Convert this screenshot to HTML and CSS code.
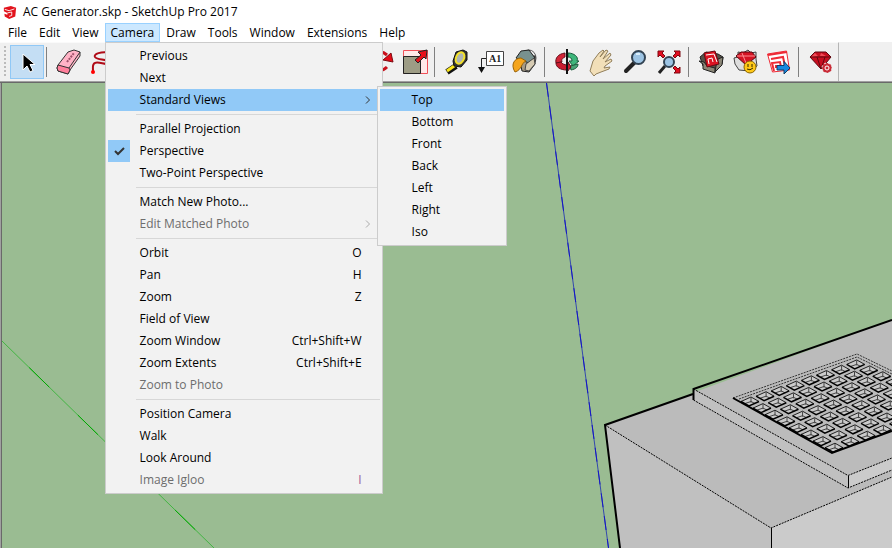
FILE: index.html
```html
<!DOCTYPE html>
<html lang="en">
<head>
<meta charset="utf-8">
<title>AC Generator.skp - SketchUp Pro 2017</title>
<link rel="stylesheet" href="styles.css">
</head>
<body>
<header class="titlebar">
  <svg class="logo" viewBox="0 0 16 16" aria-hidden="true"><path fill="#e2131c" d="M1 3 9 1l6 2-1 10-7 3-5-3-.4-3L5 11V9L1 7z"/><path fill="none" stroke="#fff" d="M2 5 7 6.500l6-2M5 9l5-1v4l-3 1"/></svg>
  <h1 class="title">AC Generator.skp - SketchUp Pro 2017</h1>
</header>
<nav class="menubar">
  <button>File</button><button>Edit</button><button>View</button>
  <div class="menu-anchor">
    <button class="open">Camera</button>
    <div class="menu camera-menu">
      <button class="item">Previous</button>
      <button class="item">Next</button>
      <div class="sub-anchor">
        <button class="item active">Standard Views<svg class="chevron" viewBox="0 0 6 8"><path d="M1 .5 4.500 4 1 7.500"/></svg></button>
        <div class="menu submenu">
          <button class="item active">Top</button>
          <button class="item">Bottom</button>
          <button class="item">Front</button>
          <button class="item">Back</button>
          <button class="item">Left</button>
          <button class="item">Right</button>
          <button class="item">Iso</button>
        </div>
      </div>
      <hr>
      <button class="item">Parallel Projection</button>
      <button class="item"><span class="check"><svg viewBox="0 0 22 22"><path d="m7 11 3 3 6-6"/></svg></span>Perspective</button>
      <button class="item">Two-Point Perspective</button>
      <hr>
      <button class="item">Match New Photo...</button>
      <button class="item" disabled>Edit Matched Photo<svg class="chevron" viewBox="0 0 6 8"><path d="M1 .5 4.500 4 1 7.500"/></svg></button>
      <hr>
      <button class="item">Orbit<span class="key">O</span></button>
      <button class="item">Pan<span class="key">H</span></button>
      <button class="item">Zoom<span class="key">Z</span></button>
      <button class="item">Field of View</button>
      <button class="item">Zoom Window<span class="key">Ctrl+Shift+W</span></button>
      <button class="item">Zoom Extents<span class="key">Ctrl+Shift+E</span></button>
      <button class="item" disabled>Zoom to Photo</button>
      <hr>
      <button class="item">Position Camera</button>
      <button class="item">Walk</button>
      <button class="item">Look Around</button>
      <button class="item" disabled>Image Igloo<span class="key violet">I</span></button>
    </div>
  </div>
  <button>Draw</button><button>Tools</button><button>Window</button><button>Extensions</button><button>Help</button>
</nav>
<div class="toolbar-row">
  <div class="toolbar">
    <span class="grip"></span>
    <button class="tool selected" aria-label="Select"><svg viewBox="0 0 32 32"><path d="M12 8v16l4-4 3 6 3-1.500-3-6h5z" stroke="#fff" fill="#000"/></svg></button>
    <span class="divider"></span>
    <button class="tool" aria-label="Eraser"><svg viewBox="0 0 32 32"><path fill="#ffb3c6" stroke="#333" d="M5 19 15 6l6-2 6 2v4L17 24l-2 4-10-3-1-3z"/><path fill="#ff7f9b" stroke="#333" d="m5 19 11 3 1 2-2 4-10-3-1-3z"/><path stroke="#333" d="M16 22 27 6"/><path stroke="#a0526a" stroke-width="2" stroke-dasharray="2 1" d="m14 16 7-9"/></svg></button>
    <button class="tool" aria-label="Freehand"><svg viewBox="0 0 32 32"><path fill="none" stroke="#b00c18" stroke-width="2" d="M24 7C14 5 6 8 8 11c3 4 14 1 14 7-4 1-11-3-14-1-3 1-2 4-2 8"/><circle cx="6" cy="26" r="2" fill="#f00"/></svg></button>
    <span class="covered-tools"></span>
    <button class="tool" aria-label="Rotate"><svg viewBox="0 0 32 32"><path fill="none" stroke="#c8101b" stroke-width="3" d="M6 12q8-10 16-3M22 21q-7 7-15 0"/><path fill="#e30b17" stroke="#7c0910" d="m26 7 2 9-10-2zM5 26l-1-9 8 3z"/></svg></button>
    <button class="tool" aria-label="Scale"><svg viewBox="0 0 32 32"><path fill="#ffe9e9" stroke="#f05058" d="M4.500 4.500h24v23h-24z"/><path fill="#9d9c85" stroke="#222" d="M4.500 10.500h17v17h-17z"/><path fill="#e8101a" stroke="#222" d="m16 14 6-5-3-3 9-2-1 9-2-2-6 6z"/></svg></button>
    <span class="divider"></span>
    <button class="tool" aria-label="Tape Measure"><svg viewBox="0 0 32 32"><path stroke="#111" stroke-width="6" d="m6 26 9-6"/><path stroke="#f8e51c" stroke-width="3" d="m6 25 10-7"/><path fill="#333" stroke="#111" d="m12 15 3-9 7-2 4 2v8l-6 7-7-1z"/><ellipse cx="19" cy="12" rx="4" ry="6" transform="rotate(25 19 12)" fill="#aeb4b2" stroke="#f3e12a" stroke-width="2"/></svg></button>
    <button class="tool" aria-label="Text"><svg viewBox="0 0 32 32"><path fill="#fff" stroke="#444" d="M11.500 5.500h17v14h-17z"/><path fill="none" stroke="#222" d="M11 12.500H6.500V22"/><path fill="#111" d="M3 21h7l-3.500 6z"/><text x="14" y="16" class="icon-text">A1</text></svg></button>
    <button class="tool" aria-label="Paint Bucket"><svg viewBox="0 0 32 32"><ellipse cx="20" cy="12" rx="7" ry="8" fill="none" stroke="#555"/><path fill="#a79b84" stroke="#222" d="m10 11 16-1v8l-6 8-7-1z"/><path fill="#78918f" stroke="#222" d="m7 12 5-7 8-1 6 8-6 5-8-3z"/><path fill="#d6cbb3" stroke="#444" d="m17 18 8-6 1 6-6 7-4-1z"/><path fill="#f5a51c" stroke="#9a6307" d="M6 26c-5-8 0-14 6-14l5 3c-5 2-4 9-11 11z"/></svg></button>
    <span class="divider"></span>
    <button class="tool" aria-label="Orbit"><svg viewBox="0 0 32 32"><path fill="#3eb67b" stroke="#195c3c" d="M17 7c6 0 11 4 9 8h2l-6 5-4-5h3c0-3-2-4-4-4z"/><path fill="#48a576" stroke="#195c3c" d="m19 20 8-2c0 3-2 5-7 6z"/><path fill="#d32638" stroke="#640f1a" d="M14 7C7 8 4 12 5 17l6-1c-1-3 1-4 3-5z"/><path fill="#c91c2f" stroke="#640f1a" d="m5 17 5-1c1 2 4 3 7 3v-3l3 5-4 5v-2C9 24 5 21 5 17z"/><path stroke="#111" stroke-width="2" d="M16 3v25"/></svg></button>
    <button class="tool" aria-label="Pan"><svg viewBox="0 0 32 32"><path fill="#f2dfb8" stroke="#917e5a" d="m5 25 3-10 6-8 4-3 1 1-4 6 6-7 2 1-5 8 7-6 1 2-6 7 6-3 1 2-7 5-1 2 6-1-1 2-8 3-5 2-2 2z"/></svg></button>
    <button class="tool" aria-label="Zoom"><svg viewBox="0 0 32 32"><path stroke="#222" stroke-width="4" stroke-linecap="round" d="m7 25 8-8"/><circle cx="19.500" cy="11.500" r="6.500" fill="#9dc4e4" stroke="#334454" stroke-width="2"/><path stroke="#d9edfa" stroke-width="2" d="m17 8 4 0"/></svg></button>
    <button class="tool" aria-label="Zoom Extents"><svg viewBox="0 0 32 32"><path stroke="#222" stroke-width="3" d="m6 27 6-7"/><circle cx="16" cy="16" r="5" fill="#9dc4e4" stroke="#334454" stroke-width="2"/><g fill="#e20d20" stroke="#7c0910"><path d="M5 5h6L9 7l3 3-2 2-3-3-2 2zM27 5h-6l2 2-3 3 2 2 3-3 2 2zM27 27h-6l2-2-3-3 2-2 3 3 2-2z"/></g></svg></button>
    <span class="divider"></span>
    <button class="tool" aria-label="3D Warehouse"><svg viewBox="0 0 32 32"><path fill="#555248" stroke="#222" d="m5 11 6-5 12 2 5 3-1 7-7 6-12-4z"/><path fill="#8c8878" stroke="#222" d="m4 15 5 1 3 4 8 2v5L8 23v-5zM21 20l2-7 5-2-1 8-7 7z"/><path fill="#dc1422" stroke="#670912" d="m9 7 11-2 4 13-12 3z"/><path fill="none" stroke="#fff" d="m11 9 8-1 3 8M14 18l-1-5 4-1 1 4"/></svg></button>
    <button class="tool" aria-label="Share Model"><svg viewBox="0 0 32 32"><path fill="#ddd" stroke="#444" d="m5 12 4-1V6l5 1 5-3 3 3 5-1v7l1 7-7 5-11-1-4-6z"/><path fill="#d41323" stroke="#5b0710" d="m7 10 5-4h11l4 5-10 8z"/><path stroke="#ff8b91" d="M8 10h18M13 7l4 10"/><circle cx="21" cy="21" r="6" fill="#ffc817" stroke="#896500"/><path fill="none" stroke="#332900" d="M19 18v3m4-3v3m-5 2q3 2 6-1"/></svg></button>
    <button class="tool" aria-label="Send to LayOut"><svg viewBox="0 0 32 32"><path fill="#fff" stroke="#ee2a35" d="m4.500 8 19-3 3 19-17 2z"/><path fill="none" stroke="#ee2a35" stroke-width="2" d="m5 9 19-3M8 13l12-2 2 9M11 25l-2-8 8-1 1 5M13 22v-3"/><path fill="#1689e0" stroke="#123d66" d="M14 19.500h7v-4l6 6.500-6 6v-4h-7z"/></svg></button>
    <span class="divider"></span>
    <button class="tool" aria-label="Extension Warehouse"><svg viewBox="0 0 32 32"><path fill="#c70e20" stroke="#5c0710" d="m5 11 5-5h11l5 5-10 12z"/><path fill="#f04b57" d="m10 7 3 3-7 1zm6 0 5 3h-6z"/><path fill="none" stroke="#65080f" d="M5 11h21M12 11l4 12 4-12"/><circle cx="22" cy="22" r="5" fill="#c92a36" stroke="#f0f0f0" stroke-dasharray="2 2"/><circle cx="22" cy="22" r="2" fill="#c92a36" stroke="#fff"/></svg></button>
  </div>
</div>
<main class="viewport">
  <svg class="scene" viewBox="2 83 890 465" preserveAspectRatio="xMinYMin slice" role="img" aria-label="Model view">
    <path stroke="#43b543" d="m2 341 212 207"/>
    <path stroke="#00a800" stroke-dasharray="28 40" stroke-dashoffset="-38" d="m2 341 212 207"/>
    <path stroke="#3449ad" d="m546.500 83 62 465"/>
    <path stroke="#1515c8" stroke-dasharray="14 9" d="m546.500 83 62 465"/>
    <path fill="#bbb" d="m605 425 287-105v228H620z"/>
    <path fill="#9abc92" d="m605 425 88-31v-6l-90 30z"/>
    <path fill="#c0c0c0" d="m605 425 166 103v20H620z"/>
    <path fill="#cbcbcb" d="m771 528 121-51v71H771z"/>
    <g fill="none" stroke="#000">
      <path stroke-dasharray="2 1" d="m605 425 166 103 121-51"/>
      <path d="M771.500 528v20"/>
      <path stroke-width="2" d="m693 394-88 31 15 123"/>
    </g>
    <path fill="#c0c0c0" d="M693.500 389v11L848 488v-12.500z"/>
    <path fill="#cbcbcb" d="M848 475.500 892 458v12l-44 18z"/>
    <g fill="none" stroke="#000">
      <path stroke-dasharray="2 1" d="M693.500 389 848 475.500 892 458M693.500 400 848 488l44-18"/>
      <path d="M848.500 476v12"/>
      <path stroke-width="2" d="M693.500 400v-11L892 320"/>
    </g>
    <path fill="#bbb" d="m733 398 124-44 35 17v60l-60 22z"/>
    <g fill="none" stroke="#333" stroke-dasharray="2 1"><path d="m733 398 124-44 35 17M739 399l118-42 35 17"/></g>
    <g id="grille"></g>
    <path fill="none" stroke="#000" stroke-width="2" d="m733 398 99 55 60-22"/>
  </svg>
</main>
<script src="grille.js"></script>
</body>
</html>
```
FILE: grille.js
```js
// Lays out the vent openings on the skewed plane of the top plate.
const grille = document.getElementById("grille");
const NS = "http://www.w3.org/2000/svg";
function add(cls, d) {
  const p = document.createElementNS(NS, "path");
  p.setAttribute("class", cls);
  p.setAttribute("d", d);
  grille.appendChild(p);
}
for (let j = 0; j < 8; j++) {
  for (let i = 0; i < 8; i++) {
    const x = 750 + 15.1 * i + 12 * j + 0.15 * i * j;
    const y = 401.5 - 5.3 * i + 6.6 * j - 0.1 * i * j;
    if (x > 902) continue;
    add("hole", `M${x - 9} ${y}l10-4.500 8 4.500-10 4.500z`);
    add("wall", `M${x + 1} ${y - 4}v5M${x - 5} ${y + 2}l6-2 4 2`);
    add("rim", `M${x - 9} ${y}l10-4.500 8 4.500`);
    add("edge", `M${x - 9} ${y}l8 4.500 10-4.500`);
  }
}
```
FILE: styles.css
```css
* { box-sizing: border-box; }
body {
  margin: 0;
  height: 100vh;
  display: flex;
  flex-direction: column;
  overflow: hidden;
  background: #fff;
  color: #000;
  font: 12px/16px "Open Sans", "Noto Sans", sans-serif;
}
button { font: inherit; color: inherit; border: 0; background: none; margin: 0; padding: 0; }
.titlebar { display: flex; align-items: center; gap: 6px; height: 23px; padding-left: 3px; flex: none; }
.logo { width: 14px; height: 16px; }
.title { margin: 0; font-size: 12px; font-weight: 400; }
.menubar { display: flex; height: 19px; padding-left: 2px; flex: none; }
.menubar > button, .open { height: 19px; padding: 0 6px; }
.menu-anchor, .sub-anchor { position: relative; }
.menubar .open { background: #cce8ff; border: 1px solid #99d1ff; padding: 0 5px; }
.menu { position: absolute; z-index: 2; background: #f2f2f2; border: 1px solid #ccc; padding: 2px; }
.camera-menu { top: 19px; left: 0; width: 278px; }
.submenu { top: -3px; left: 269px; width: 130px; }
.item { position: relative; display: flex; align-items: center; width: 100%; height: 22px; padding: 0 18px 0 32px; white-space: nowrap; text-align: left; }
.item.active { background: #91c9f7; }
.item:disabled { color: #6d6d6d; }
.key { margin-left: auto; }
.violet { color: #9a5b9a; }
.chevron { width: 6px; height: 8px; margin-left: auto; margin-right: -9px; fill: none; stroke: #333; }
.item:disabled .chevron { stroke: #aaa; }
.check { position: absolute; left: 0; top: 0; width: 22px; height: 22px; background: #91c9f7; }
.check svg { display: block; fill: none; stroke: #333; stroke-width: 2; }
.menu hr { height: 1px; margin: 3px 0 3px 28px; border: 0; background: #d7d7d7; }
.toolbar-row { flex: none; height: 41px; background: #f0f0f0; border-bottom: 1px solid #696969; box-shadow: inset 0 -1px #a0a0a0; }
.toolbar { display: flex; align-items: center; width: max-content; height: 39px; padding-left: 4px; border-top: 1px solid #fafafa; border-right: 1px solid #b5b5b5; }
.grip { width: 2px; height: 32px; margin-right: 4px; background: repeating-linear-gradient(#bbb 0 2px, transparent 2px 4px); }
.tool { width: 34px; height: 34px; display: grid; place-items: center; flex: none; }
.tool svg { width: 32px; height: 32px; fill: none; }
.selected { background: #c4def4; border: 1px solid #90c8f6; }
.divider { width: 1px; height: 30px; margin: 0 5px 0 2px; background: #808080; }
.covered-tools { width: 244px; }
.icon-text { font: bold 10px "Liberation Serif", serif; fill: #222; }
.viewport { flex: 1; min-height: 0; border-left: 1px solid #a0a0a0; box-shadow: inset 1px 0 #696969; background: #9abc92; padding-left: 1px; }
.scene { display: block; width: 100%; height: 100%; fill: none; }
.hole { fill: #cacaca; }
.wall { fill: none; stroke: #444; }
.rim { fill: none; stroke: #222; }
.edge { fill: none; stroke: #000; stroke-width: 1.500px; }
```
